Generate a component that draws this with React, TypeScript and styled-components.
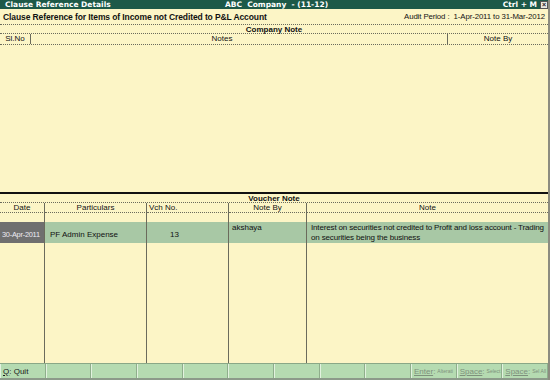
import React from 'react'
import styled, { createGlobalStyle } from 'styled-components'

const GlobalStyle = createGlobalStyle`
  html, body {
    margin: 0;
    padding: 0;
    background: #fcf5c6;
  }
  * {
    box-sizing: border-box;
  }
`

const Window = styled.div`
  width: 550px;
  height: 380px;
  display: flex;
  flex-direction: column;
  background: #fcf5c6;
  font-family: 'Liberation Sans', Arial, sans-serif;
  font-size: 8px;
  color: #111;
  border-right: 2px solid #8c8c80;
  overflow: hidden;
`

const TitleBar = styled.div`
  height: 9px;
  background: #1d5948;
  color: #ffffff;
  font-family: 'DejaVu Sans', Verdana, sans-serif;
  font-weight: bold;
  font-size: 7.5px;
  display: grid;
  grid-template-columns: 1fr auto 1fr;
  align-items: center;
  padding-left: 5px;
  line-height: 9px;
`

const TitleRight = styled.div`
  display: flex;
  justify-content: flex-end;
  align-items: center;
  gap: 3px;
`

const CloseBox = styled.span`
  width: 8px;
  height: 8px;
  background: #e8e8e0;
  border: 1px solid #555;
  display: flex;
  align-items: center;
  justify-content: center;
  color: #222;
  font-size: 7px;
  line-height: 1;
  font-family: 'Liberation Sans', Arial, sans-serif;
`

const SubHeader = styled.div`
  height: 15px;
  display: flex;
  align-items: center;
  justify-content: space-between;
  padding: 0 3px 0 3px;
  font-size: 8.5px;
`

const Strong = styled.span`
  font-weight: bold;
  letter-spacing: -0.1px;
`

const Period = styled.span`
  font-size: 7.8px;
  letter-spacing: -0.1px;
`

const SectionTitle = styled.div<{ $rule: 'dotted' | 'thick' }>`
  height: ${({ $rule }) => ($rule === 'thick' ? '11px' : '10px')};
  border-top: ${({ $rule }) => ($rule === 'thick' ? '2px solid #111' : '1px dotted #6b6b5c')};
  border-bottom: 1px dotted #6b6b5c;
  text-align: center;
  font-weight: bold;
  font-size: 8px;
  line-height: 9px;
`

const UpperHeader = styled.div`
  display: grid;
  grid-template-columns: 31px 1fr 100px;
  height: 11px;
  border-bottom: 1px dotted #6b6b5c;
  line-height: 10px;
`

const HeadCell = styled.div<{ $align?: 'left' | 'center'; $pad?: string; $last?: boolean }>`
  text-align: ${({ $align }) => $align || 'center'};
  padding: ${({ $pad }) => $pad || '0'};
  border-right: ${({ $last }) => ($last ? 'none' : '1px solid #6b6b5c')};
  white-space: nowrap;
  overflow: hidden;
`

const UpperBody = styled.div`
  flex: 1;
`

const LowerGrid = styled.div`
  height: 160px;
  display: grid;
  grid-template-columns: 45px 102px 82px 78px 1fr;
  grid-template-rows: 10px 9px 21px 1fr;
`

const GridCell = styled.div<{ $bg?: string; $last?: boolean; $head?: boolean; $align?: string; $pad?: string; $valign?: string; $color?: string }>`
  background: ${({ $bg }) => $bg || 'transparent'};
  border-right: ${({ $last }) => ($last ? 'none' : '1px solid #6b6b5c')};
  border-bottom: ${({ $head }) => ($head ? '1px dotted #6b6b5c' : 'none')};
  text-align: ${({ $align }) => $align || 'left'};
  padding: ${({ $pad }) => $pad || '0'};
  display: flex;
  flex-direction: column;
  justify-content: ${({ $valign }) => $valign || 'flex-start'};
  color: ${({ $color }) => $color || 'inherit'};
  line-height: 9px;
  white-space: nowrap;
  overflow: hidden;
`

const DateText = styled.span`
  font-size: 7.4px;
  letter-spacing: -0.25px;
`

const NoteText = styled.div`
  white-space: normal;
  line-height: 10px;
  letter-spacing: -0.15px;
`

const ButtonBar = styled.div`
  height: 17px;
  display: grid;
  grid-template-columns: repeat(12, 1fr);
  background: #b5dbb1;
  border-top: 1px solid #8aa887;
  border-bottom: 2px solid #8c9a8a;
`

const BarButton = styled.div<{ $dim?: boolean }>`
  border-right: 1px solid #8fae8c;
  box-shadow: inset 1px 0 0 #e2f2df;
  display: flex;
  align-items: center;
  padding-left: 3px;
  font-size: 8px;
  white-space: nowrap;
  overflow: hidden;
  color: ${({ $dim }) => ($dim ? '#7e917c' : '#1a1a1a')};
`

const Key = styled.span`
  text-decoration: underline;
`

const Hint = styled.span`
  font-size: 5px;
  margin-left: 2px;
`

const bottomButtons: { key?: string; label?: string; dim?: boolean }[] = [
  { key: 'Q', label: ': Quit' },
  {}, {}, {}, {}, {}, {}, {}, {},
  { key: 'Enter', label: 'Alterati', dim: true },
  { key: 'Space', label: 'Select', dim: true },
  { key: 'Space', label: 'Sel All', dim: true }
]

export default function App() {
  return (
    <>
      <GlobalStyle />
      <Window>
        <TitleBar>
          <span>Clause Reference Details</span>
          <span>ABC&nbsp; Company&nbsp; - (11-12)</span>
          <TitleRight>
            <span>Ctrl + M</span>
            <CloseBox>×</CloseBox>
          </TitleRight>
        </TitleBar>
        <SubHeader>
          <Strong>Clause Reference for Items of Income not Credited to P&amp;L Account</Strong>
          <Period>Audit Period :&nbsp; 1-Apr-2011 to 31-Mar-2012</Period>
        </SubHeader>

        <SectionTitle $rule="dotted">Company Note</SectionTitle>
        <UpperHeader>
          <HeadCell>Sl.No</HeadCell>
          <HeadCell $pad="0 34px 0 0">Notes</HeadCell>
          <HeadCell $last>Note By</HeadCell>
        </UpperHeader>
        <UpperBody />

        <SectionTitle $rule="thick">Voucher Note</SectionTitle>
        <LowerGrid>
          <GridCell $head $align="center">Date</GridCell>
          <GridCell $head $align="center">Particulars</GridCell>
          <GridCell $head $pad="0 0 0 2px">Vch No.</GridCell>
          <GridCell $head $align="center">Note By</GridCell>
          <GridCell $head $last $align="center">Note</GridCell>

          <GridCell />
          <GridCell />
          <GridCell />
          <GridCell />
          <GridCell $last />

          <GridCell $bg="#6f6f6f" $color="#ecebf4" $valign="flex-end" $pad="0 0 4px 2px">
            <DateText>30-Apr-2011</DateText>
          </GridCell>
          <GridCell $bg="#a8c8a5" $valign="flex-end" $pad="0 0 4px 5px">
            PF Admin Expense
          </GridCell>
          <GridCell $bg="#a8c8a5" $valign="flex-end" $pad="0 0 4px 23px">
            13
          </GridCell>
          <GridCell $bg="#a8c8a5" $pad="1px 0 0 3px">
            akshaya
          </GridCell>
          <GridCell $bg="#a8c8a5" $last $pad="1px 2px 0 4px">
            <NoteText>
              Interest on securities not credited to Profit and loss account - Trading on securities being the business
            </NoteText>
          </GridCell>

          <GridCell />
          <GridCell />
          <GridCell />
          <GridCell />
          <GridCell $last />
        </LowerGrid>

        <ButtonBar>
          {bottomButtons.map((b, i) => (
            <BarButton key={i} $dim={b.dim}>
              {b.key && <Key>{b.key}</Key>}
              {b.dim ? (
                <>
                  :<Hint>{b.label}</Hint>
                </>
              ) : (
                b.label
              )}
            </BarButton>
          ))}
        </ButtonBar>
      </Window>
    </>
  )
}
